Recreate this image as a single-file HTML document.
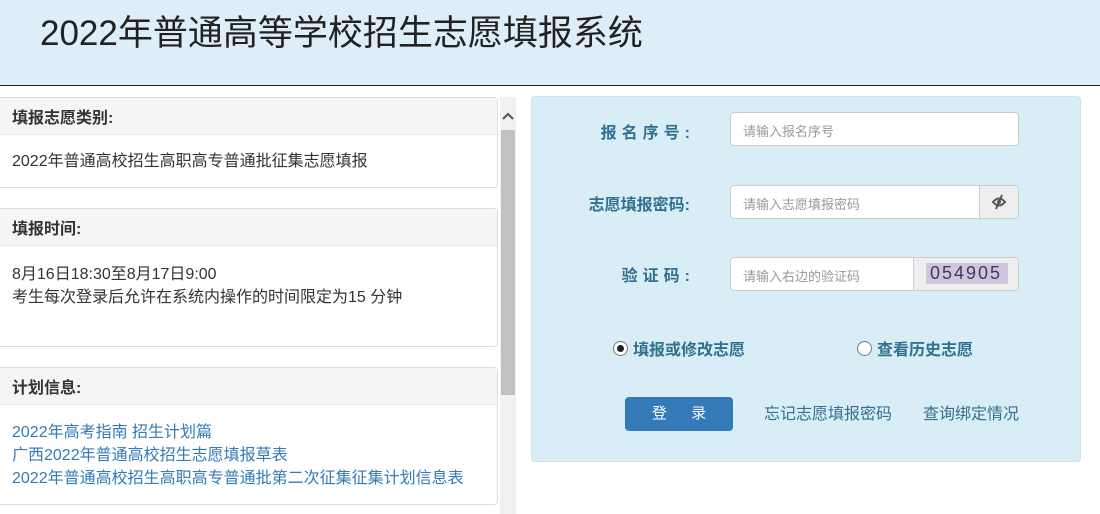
<!DOCTYPE html>
<html><head><meta charset="utf-8"><style>
*{box-sizing:border-box;margin:0;padding:0}
body{width:1100px;height:514px;overflow:hidden;background:#fff;font-family:"Liberation Sans","Noto Sans CJK SC",sans-serif;position:relative}
.hd{position:absolute;left:0;top:0;width:1100px;height:86px;background:#ddeef8;border-bottom:1px solid #222}
.hd h1{position:absolute;left:40px;top:5px;font-size:35px;font-weight:normal;color:#222}
.pn{position:absolute;left:0;width:498px;border:1px solid #ddd;border-left:none;border-radius:0 4px 4px 0;background:#fff}
.pn .t{height:37px;background:#f5f5f5;border-bottom:1px solid #e8e8e8;font-size:16px;font-weight:bold;color:#333;padding:6px 0 0 12px}
.pn .b{padding:15px 12px;font-size:16px;color:#333;line-height:23px}
.pn a{color:#337ab7;text-decoration:none;display:block;line-height:23px}
.sb{position:absolute;left:500px;top:97px;width:16px;height:417px;background:#f1f1f1}
.th{position:absolute;left:501px;top:130px;width:14px;height:265px;background:#c1c1c1}
.rp{position:absolute;left:531px;top:96px;width:550px;height:366px;background:#d9edf7;border:1px solid #cfe3ee;border-radius:4px}
.lb{position:absolute;right:410px;font-size:16px;font-weight:bold;color:#31708f;text-align:right}
.in{position:absolute;left:730px;height:34px;background:#fff;border:1px solid #ccc;border-radius:4px;font-size:13px;color:#999;padding:8px 12px}
.ad{position:absolute;height:34px;background:#eee;border:1px solid #ccc;border-radius:0 4px 4px 0}
.rd{position:absolute;font-size:16px;font-weight:bold;color:#31708f}
.rd i{display:inline-block;width:15px;height:15px;border:1px solid #777;border-radius:50%;background:#fff;vertical-align:-1px;margin-right:5px;position:relative}
.btn{position:absolute;left:625px;top:397px;width:108px;height:34px;background:#337ab7;border-radius:4px;color:#fff;font-size:15px;text-align:center;line-height:34px;word-spacing:20px}
.lk{position:absolute;top:400px;font-size:16px;color:#31708f}
</style></head><body>
<div class="hd"><h1>2022年普通高等学校招生志愿填报系统</h1></div>

<div class="pn" style="top:97px;height:91px"><div class="t">填报志愿类别:</div><div class="b">2022年普通高校招生高职高专普通批征集志愿填报</div></div>
<div class="pn" style="top:208px;height:139px"><div class="t">填报时间:</div><div class="b" style="padding-top:17px">8月16日18:30至8月17日9:00<br>考生每次登录后允许在系统内操作的时间限定为15 分钟</div></div>
<div class="pn" style="top:367px;height:138px"><div class="t">计划信息:</div><div class="b" style="padding-top:16px"><a>2022年高考指南 招生计划篇</a><a>广西2022年普通高校招生志愿填报草表</a><a>2022年普通高校招生高职高专普通批第二次征集征集计划信息表</a></div></div>
<div class="sb"></div><div class="th"></div>
<svg style="position:absolute;left:501px;top:111px" width="14" height="10"><path d="M2 8 L7 3 L12 8" stroke="#555" stroke-width="2" fill="none"/></svg>

<div class="rp"></div>
<div class="lb" style="top:119px;letter-spacing:5px;right:405px">报名序号:</div>
<div class="in" style="top:112px;width:289px">请输入报名序号</div>
<div class="lb" style="top:191px">志愿填报密码:</div>
<div class="in" style="top:185px;width:250px;border-radius:4px 0 0 4px">请输入志愿填报密码</div>
<div class="ad" style="left:979px;top:185px;width:40px"><svg width="38" height="32"><path d="M13 16 Q19 9 25 16 Q19 23 13 16Z" fill="none" stroke="#555" stroke-width="2"/><circle cx="19" cy="16" r="2" fill="#555"/><path d="M16 23 L22 9" stroke="#555" stroke-width="2"/></svg></div>
<div class="lb" style="top:262px;letter-spacing:5px;right:405px">验证码:</div>
<div class="in" style="top:257px;width:184px;border-radius:4px 0 0 4px">请输入右边的验证码</div>
<div class="ad" style="left:913px;top:257px;width:106px"><div style="position:absolute;left:12px;top:5px;width:82px;height:21px;background:#cfc6dc;font-size:18px;letter-spacing:2px;color:#3a3a6a;line-height:21px;padding-left:4px">054905</div></div>

<div class="rd" style="left:613px;top:336px"><i><span style="position:absolute;left:3px;top:3px;width:7px;height:7px;border-radius:50%;background:#222"></span></i>填报或修改志愿</div>
<div class="rd" style="left:857px;top:336px"><i></i>查看历史志愿</div>
<div class="btn">登 录</div>
<div class="lk" style="left:764px">忘记志愿填报密码</div>
<div class="lk" style="left:923px">查询绑定情况</div>
</body></html>
